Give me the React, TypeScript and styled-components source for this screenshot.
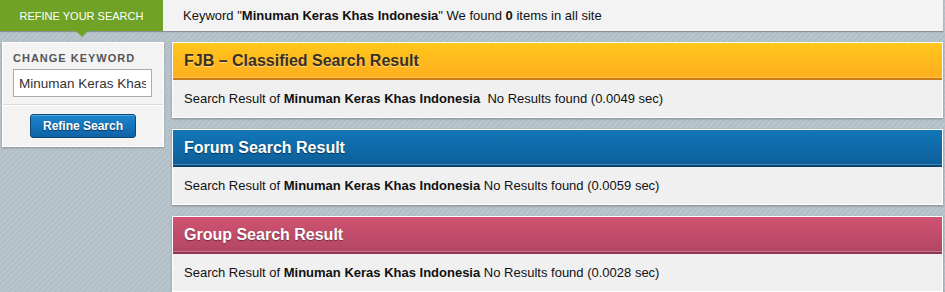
import React from 'react';
import styled, { createGlobalStyle } from 'styled-components';

const GlobalStyle = createGlobalStyle`
  html, body {
    margin: 0;
    padding: 0;
  }
  body {
    font-family: "Liberation Sans", Arial, sans-serif;
    background-color: #b4c0c8;
    background-image: repeating-linear-gradient(
      135deg,
      #b3bfc7 0px,
      #b3bfc7 2px,
      #b9c5cc 2px,
      #b9c5cc 4px
    );
    width: 945px;
    height: 292px;
    overflow: hidden;
  }
`;

const Page = styled.div`
  width: 945px;
  height: 292px;
  overflow: hidden;
`;

const TopBar = styled.div`
  display: flex;
  height: 31px;
  width: 943px;
  box-shadow: 0 1px 1px rgba(0, 0, 0, 0.25);
`;

const Tab = styled.div`
  position: relative;
  width: 163px;
  flex: none;
  background: #70a225;
  color: #fff;
  font-size: 11px;
  display: flex;
  align-items: center;
  justify-content: center;
  text-transform: uppercase;

  &::after {
    content: '';
    position: absolute;
    left: 76px;
    bottom: -6px;
    border-left: 6px solid transparent;
    border-right: 6px solid transparent;
    border-top: 6px solid #70a225;
  }
`;

const Summary = styled.div`
  flex: 1;
  background: #f3f3f3;
  color: #111;
  font-size: 13px;
  padding-left: 20px;
  line-height: 31px;
  white-space: pre;
`;

const Body = styled.div`
  display: flex;
  align-items: flex-start;
  gap: 8px;
  padding: 11px 2px 0 2px;
`;

const Sidebar = styled.div`
  width: 162px;
  flex: none;
  background: #f3f3f3;
  border: 1px solid #fff;
  box-shadow: 0 1px 2px rgba(0, 0, 0, 0.25);
  box-sizing: border-box;
  height: 105px;
`;

const SideSection = styled.div`
  padding: 9px 10px 7px 10px;
  border-bottom: 1px solid #dcdcdc;
  box-shadow: 0 1px 0 #fff;
`;

const Label = styled.div`
  font-size: 11px;
  font-weight: bold;
  letter-spacing: 1px;
  color: #555;
  margin-bottom: 4px;
  line-height: 13px;
`;

const KeywordInput = styled.input`
  box-sizing: border-box;
  width: 139px;
  height: 28px;
  border: 1px solid #aaa;
  background: #fff;
  font-family: "Liberation Sans", Arial, sans-serif;
  font-size: 13.5px;
  color: #333;
  padding: 0 5px;
  outline: none;
`;

const ButtonRow = styled.div`
  display: flex;
  justify-content: center;
  padding-top: 9px;
`;

const RefineButton = styled.button`
  width: 106px;
  height: 24px;
  border: 1px solid #0b4777;
  border-radius: 3px;
  background: linear-gradient(#1b86cf, #0f62a6);
  color: #fff;
  font-family: "Liberation Sans", Arial, sans-serif;
  font-size: 12px;
  font-weight: bold;
  text-shadow: 0 1px 1px rgba(0, 0, 0, 0.5);
  box-shadow: inset 0 1px 0 rgba(255, 255, 255, 0.25);
  padding: 0;
`;

const Results = styled.div`
  flex: 1;
  display: flex;
  flex-direction: column;
  gap: 11px;
  max-width: 771px;
`;

const Panel = styled.div`
  border: 1px solid #fff;
  background: #f0f0f0;
  box-shadow: 0 1px 2px rgba(0, 0, 0, 0.3);
`;

type Tone = 'orange' | 'blue' | 'pink';

const tones: Record<Tone, { top: string; bottom: string; line: string; text: string; shadow: string }> = {
  orange: { top: '#ffc61c', bottom: '#ffae1e', line: '#d07a12', text: '#3a3020', shadow: 'rgba(255,255,255,0.5)' },
  blue: { top: '#1276b8', bottom: '#0d5f98', line: '#0a4670', text: '#fff', shadow: 'rgba(0,0,0,0.5)' },
  pink: { top: '#d05372', bottom: '#b24664', line: '#8e3550', text: '#fff', shadow: 'rgba(0,0,0,0.4)' },
};

const PanelHeader = styled.div<{ $tone: Tone }>`
  height: 35px;
  padding-left: 11px;
  line-height: 35px;
  background: linear-gradient(${(p) => tones[p.$tone].top}, ${(p) => tones[p.$tone].bottom});
  border-bottom: 2px solid ${(p) => tones[p.$tone].line};
  box-shadow: inset 0 -1px 0 rgba(255, 255, 255, 0.25);
  color: ${(p) => tones[p.$tone].text};
  text-shadow: 0 1px 1px ${(p) => tones[p.$tone].shadow};
  font-size: 16px;
  font-weight: bold;
`;

const PanelBody = styled.div`
  height: 37px;
  padding-left: 11px;
  line-height: 37px;
  font-size: 13px;
  color: #111;
  white-space: pre;
`;

const keyword = 'Minuman Keras Khas Indonesia';

const sections: { tone: Tone; title: string; gap: string; time: string }[] = [
  { tone: 'orange', title: 'FJB – Classified Search Result', gap: '  ', time: '0.0049' },
  { tone: 'blue', title: 'Forum Search Result', gap: ' ', time: '0.0059' },
  { tone: 'pink', title: 'Group Search Result', gap: ' ', time: '0.0028' },
];

export default function App() {
  return (
    <Page>
      <GlobalStyle />
      <TopBar>
        <Tab>Refine your search</Tab>
        <Summary>
          Keyword "<b>{keyword}</b>" We found <b>0</b> items in all site
        </Summary>
      </TopBar>
      <Body>
        <Sidebar>
          <SideSection>
            <Label>CHANGE KEYWORD</Label>
            <KeywordInput defaultValue={keyword} />
          </SideSection>
          <ButtonRow>
            <RefineButton>Refine Search</RefineButton>
          </ButtonRow>
        </Sidebar>
        <Results>
          {sections.map((s) => (
            <Panel key={s.tone}>
              <PanelHeader $tone={s.tone}>{s.title}</PanelHeader>
              <PanelBody>
                Search Result of <b>{keyword}</b>
                {s.gap}No Results found ({s.time} sec)
              </PanelBody>
            </Panel>
          ))}
        </Results>
      </Body>
    </Page>
  );
}
